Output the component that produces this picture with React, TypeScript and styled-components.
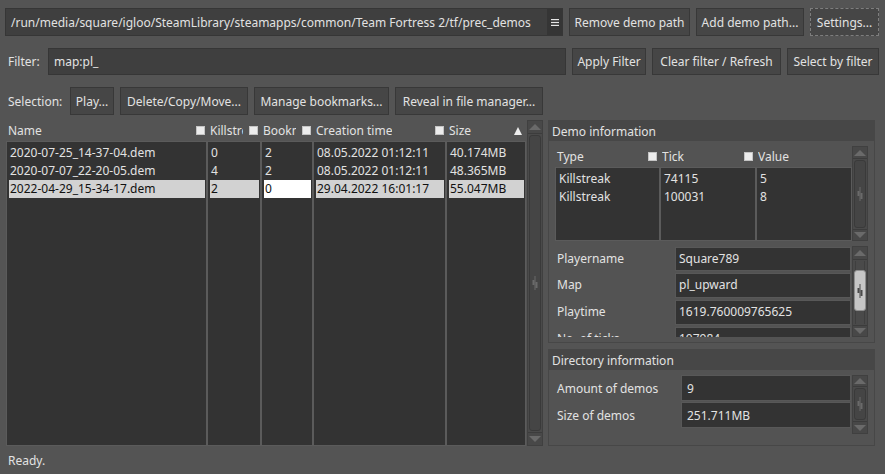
import React from "react";
import styled, { createGlobalStyle } from "styled-components";

const Global = createGlobalStyle`
  html, body { margin: 0; padding: 0; background: #545454; }
  #root { width: 885px; height: 474px; }
`;

const Window = styled.div`
  width: 885px;
  height: 474px;
  box-sizing: border-box;
  background: #545454;
  color: #e2e2e2;
  font-family: "Noto Sans", "DejaVu Sans", sans-serif;
  font-size: 12px;
  display: flex;
  flex-direction: column;
  padding: 8px 6px 0 5px;
  overflow: hidden;
`;

const Bar = styled.div<{ $top?: number; $h?: number }>`
  display: flex;
  align-items: stretch;
  gap: 6px;
  height: ${(p) => p.$h ?? 28}px;
  margin-top: ${(p) => p.$top ?? 0}px;
  flex-shrink: 0;
`;

const Label = styled.div<{ $w: number }>`
  width: ${(p) => p.$w}px;
  box-sizing: border-box;
  padding-left: 3px;
  display: flex;
  align-items: center;
  white-space: nowrap;
`;

const Button = styled.div<{ $w: number; $focus?: boolean }>`
  width: ${(p) => p.$w}px;
  box-sizing: border-box;
  background: #464646;
  border: 1px ${(p) => (p.$focus ? "dashed #7e7e7e" : "solid #383838")};
  display: flex;
  align-items: center;
  justify-content: center;
  white-space: nowrap;
  overflow: hidden;
`;

const Combo = styled.div<{ $w: number }>`
  width: ${(p) => p.$w}px;
  box-sizing: border-box;
  background: #3f3f3f;
  border: 1px solid #363636;
  display: flex;
  align-items: stretch;
`;

const ComboText = styled.div`
  flex: 1;
  padding-left: 5px;
  display: flex;
  align-items: center;
  white-space: nowrap;
  overflow: hidden;
`;

const ComboArrow = styled.div`
  width: 15px;
  background: #353535;
  display: flex;
  align-items: center;
  justify-content: center;
`;

const TextInput = styled.div<{ $w: number }>`
  width: ${(p) => p.$w}px;
  box-sizing: border-box;
  background: #3f3f3f;
  border: 1px solid #363636;
  padding-left: 5px;
  display: flex;
  align-items: center;
`;

const Main = styled.div`
  display: flex;
  gap: 5px;
  height: 326px;
  margin-top: 5px;
  flex-shrink: 0;
`;

const LeftPane = styled.div`
  width: 538px;
  display: flex;
  gap: 1px;
`;

const TableArea = styled.div`
  width: 521px;
  display: flex;
  flex-direction: column;
`;

const HeaderRow = styled.div<{ $indent?: number; $h?: number }>`
  display: flex;
  height: ${(p) => p.$h ?? 21}px;
  padding-left: ${(p) => p.$indent ?? 0}px;
  flex-shrink: 0;
`;

const HeaderCell = styled.div<{ $w: number; $pad?: number }>`
  width: ${(p) => p.$w}px;
  box-sizing: border-box;
  display: flex;
  align-items: center;
  gap: 5px;
  padding-left: ${(p) => p.$pad ?? 0}px;
  padding-right: 6px;
  white-space: nowrap;
  overflow: hidden;
`;

const HeaderText = styled.span`
  overflow: hidden;
  flex-shrink: 1;
  min-width: 0;
`;

const Check = styled.span`
  width: 9px;
  height: 9px;
  flex-shrink: 0;
  box-sizing: border-box;
  background: #ececec;
  border: 1px solid #c4c4c4;
`;

const SortUp = styled.span`
  margin-left: auto;
  margin-right: -2px;
  flex-shrink: 0;
  width: 0;
  height: 0;
  border-left: 4px solid transparent;
  border-right: 4px solid transparent;
  border-bottom: 8px solid #ededed;
`;

const Body = styled.div<{ $indent?: number }>`
  flex: 1;
  display: flex;
  padding-left: ${(p) => p.$indent ?? 0}px;
  min-height: 0;
`;

const Column = styled.div<{ $w: number }>`
  width: ${(p) => p.$w}px;
  box-sizing: border-box;
  background: #333333;
  border: 1px solid #5b5b5b;
  padding: 2px 1px 2px 2px;
  display: flex;
  flex-direction: column;
  overflow: hidden;
`;

const Cell = styled.div<{ $sel?: "row" | "edit" }>`
  height: 18px;
  line-height: 18px;
  padding-left: 1px;
  white-space: nowrap;
  overflow: hidden;
  background: ${(p) => (p.$sel === "row" ? "#d2d2d2" : p.$sel === "edit" ? "#ffffff" : "transparent")};
  color: ${(p) => (p.$sel ? "#111111" : "inherit")};
`;

/* Scrollbar */
const SBar = styled.div<{ $h?: number }>`
  width: 16px;
  flex-shrink: 0;
  height: ${(p) => (p.$h ? `${p.$h}px` : "auto")};
  background: #4a4a4a;
  box-sizing: border-box;
  border: 1px solid #404040;
  display: flex;
  flex-direction: column;
`;

const SButton = styled.div<{ $h: number; $down?: boolean }>`
  height: ${(p) => p.$h}px;
  flex-shrink: 0;
  display: flex;
  align-items: center;
  justify-content: center;
  background: #484848;
  border-${(p) => (p.$down ? "top" : "bottom")}: 1px solid #3c3c3c;
`;

const Tri = styled.span<{ $down?: boolean }>`
  width: 0;
  height: 0;
  border-left: 6px solid transparent;
  border-right: 6px solid transparent;
  ${(p) => (p.$down ? "border-top" : "border-bottom")}: 6px solid #6a6a6a;
`;

const Groove = styled.div`
  flex: 1;
  display: flex;
  flex-direction: column;
  padding: 1px 0;
  min-height: 0;
`;

const Handle = styled.div<{ $light?: boolean }>`
  flex: 1;
  margin: 0 1px;
  border-radius: 3px;
  border: 1px solid ${(p) => (p.$light ? "#8f8f8f" : "#3a3a3a")};
  background: ${(p) => (p.$light ? "#c6c6c6" : "#454545")};
  display: flex;
  align-items: center;
  justify-content: center;
`;

const GrooveGap = styled.div<{ $h: number }>`
  height: ${(p) => p.$h}px;
  flex-shrink: 0;
  margin: 0 2px;
  border-left: 1px solid #3f3f3f;
  border-right: 1px solid #3f3f3f;
`;

const Grip = ({ color }: { color: string }) => (
  <svg width="6" height="14" viewBox="0 0 6 14">
    <rect x="2.5" y="0" width="1" height="14" fill={color} />
    <rect x="0.5" y="4" width="2" height="5" fill={color} />
    <rect x="3.5" y="6" width="2" height="6" fill={color} />
  </svg>
);

const Scrollbar = ({
  height,
  up,
  down,
  before = 0,
  after = 0,
  light,
}: {
  height?: number;
  up: number;
  down: number;
  before?: number;
  after?: number;
  light?: boolean;
}) => (
  <SBar $h={height}>
    <SButton $h={up}>
      <Tri />
    </SButton>
    <Groove>
      {before > 0 && <GrooveGap $h={before} />}
      <Handle $light={light}>
        <Grip color={light ? "#4a4a4a" : "#6a6a6a"} />
      </Handle>
      {after > 0 && <GrooveGap $h={after} />}
    </Groove>
    <SButton $h={down} $down>
      <Tri $down />
    </SButton>
  </SBar>
);

/* Right panel */
const RightPanel = styled.div`
  width: 327px;
  display: flex;
  flex-direction: column;
  gap: 6px;
`;

const Group = styled.div<{ $h: number }>`
  height: ${(p) => p.$h}px;
  box-sizing: border-box;
  border: 1px solid #474747;
  background: #535353;
  display: flex;
  flex-direction: column;
  flex-shrink: 0;
`;

const GroupTitle = styled.div`
  height: 20px;
  background: #474747;
  padding-left: 3px;
  display: flex;
  align-items: center;
  flex-shrink: 0;
`;

const GroupBody = styled.div`
  padding: 5px 6px 0 6px;
  display: flex;
  flex-direction: column;
  gap: 5px;
`;

const Section = styled.div<{ $h: number }>`
  height: ${(p) => p.$h}px;
  display: flex;
  overflow: hidden;
`;

const SubTable = styled.div`
  width: 297px;
  display: flex;
  flex-direction: column;
`;

const Form = styled.div<{ $gap: number; $top?: number }>`
  width: 297px;
  display: flex;
  flex-direction: column;
  gap: ${(p) => p.$gap}px;
  padding-top: ${(p) => p.$top ?? 0}px;
  overflow: hidden;
`;

const FormRow = styled.div<{ $label: number; $h: number; $lift?: number }>`
  display: grid;
  grid-template-columns: ${(p) => p.$label}px 1fr;
  height: ${(p) => p.$h}px;
  flex-shrink: 0;
  padding-right: 1px;
  & > * {
    padding-bottom: ${(p) => p.$lift ?? 0}px;
  }
`;

const FormLabel = styled.div`
  padding-left: 2px;
  display: flex;
  align-items: center;
  white-space: nowrap;
`;

const Field = styled.div<{ $pad: number }>`
  background: #333333;
  border: 1px solid #585858;
  padding-left: ${(p) => p.$pad}px;
  display: flex;
  align-items: center;
  white-space: nowrap;
  overflow: hidden;
`;

const Status = styled.div`
  height: 28px;
  padding-left: 3px;
  display: flex;
  align-items: center;
  flex-shrink: 0;
`;

const demos = [
  { name: "2020-07-25_14-37-04.dem", ks: "0", bm: "2", time: "08.05.2022 01:12:11", size: "40.174MB" },
  { name: "2020-07-07_22-20-05.dem", ks: "4", bm: "2", time: "08.05.2022 01:12:11", size: "48.365MB" },
  { name: "2022-04-29_15-34-17.dem", ks: "2", bm: "0", time: "29.04.2022 16:01:17", size: "55.047MB" },
];

const events = [
  { type: "Killstreak", tick: "74115", value: "5" },
  { type: "Killstreak", tick: "100031", value: "8" },
];

const info = [
  { label: "Playername", value: "Square789", h: 24 },
  { label: "Map", value: "pl_upward", h: 25 },
  { label: "Playtime", value: "1619.760009765625", h: 25 },
  { label: "No. of ticks", value: "107984", h: 25 },
];

export default function App() {
  const sel = 2;
  return (
    <>
      <Global />
      <Window>
        <Bar>
          <Combo $w={558}>
            <ComboText>/run/media/square/igloo/SteamLibrary/steamapps/common/Team Fortress 2/tf/prec_demos</ComboText>
            <ComboArrow>
              <svg width="8" height="7" viewBox="0 0 8 7">
                <rect x="0" y="0" width="8" height="1.2" fill="#e6e6e6" />
                <rect x="0" y="2.9" width="8" height="1.2" fill="#e6e6e6" />
                <rect x="0" y="5.8" width="8" height="1.2" fill="#e6e6e6" />
              </svg>
            </ComboArrow>
          </Combo>
          <Button $w={121}>Remove demo path</Button>
          <Button $w={108}>Add demo path...</Button>
          <Button $w={69} $focus>Settings...</Button>
        </Bar>

        <Bar $top={12} $h={27}>
          <Label $w={37}>Filter:</Label>
          <TextInput $w={518}>map:pl_</TextInput>
          <Button $w={74}>Apply Filter</Button>
          <Button $w={129}>Clear filter / Refresh</Button>
          <Button $w={92}>Select by filter</Button>
        </Bar>

        <Bar $top={12}>
          <Label $w={59}>Selection:</Label>
          <Button $w={44}>Play...</Button>
          <Button $w={128}>Delete/Copy/Move...</Button>
          <Button $w={135}>Manage bookmarks...</Button>
          <Button $w={148}>Reveal in file manager...</Button>
        </Bar>

        <Main>
          <LeftPane>
            <TableArea>
              <HeaderRow $indent={1}>
                <HeaderCell $w={190} $pad={2}>Name</HeaderCell>
                <HeaderCell $w={53}>
                  <Check />
                  <HeaderText>Killstreaks</HeaderText>
                </HeaderCell>
                <HeaderCell $w={53}>
                  <Check />
                  <HeaderText>Bookmarks</HeaderText>
                </HeaderCell>
                <HeaderCell $w={133}>
                  <Check />
                  <HeaderText>Creation time</HeaderText>
                </HeaderCell>
                <HeaderCell $w={91}>
                  <Check />
                  <HeaderText>Size</HeaderText>
                  <SortUp />
                </HeaderCell>
              </HeaderRow>
              <Body $indent={1}>
                <Column $w={201}>
                  {demos.map((d, i) => (
                    <Cell key={d.name} $sel={i === sel ? "row" : undefined}>{d.name}</Cell>
                  ))}
                </Column>
                <Column $w={54}>
                  {demos.map((d, i) => (
                    <Cell key={i} $sel={i === sel ? "row" : undefined}>{d.ks}</Cell>
                  ))}
                </Column>
                <Column $w={52}>
                  {demos.map((d, i) => (
                    <Cell key={i} $sel={i === sel ? "edit" : undefined}>{d.bm}</Cell>
                  ))}
                </Column>
                <Column $w={133}>
                  {demos.map((d, i) => (
                    <Cell key={i} $sel={i === sel ? "row" : undefined}>{d.time}</Cell>
                  ))}
                </Column>
                <Column $w={80}>
                  {demos.map((d, i) => (
                    <Cell key={i} $sel={i === sel ? "row" : undefined}>{d.size}</Cell>
                  ))}
                </Column>
              </Body>
            </TableArea>
            <Scrollbar up={12} down={12} />
          </LeftPane>

          <RightPanel>
            <Group $h={223}>
              <GroupTitle>Demo information</GroupTitle>
              <GroupBody>
                <Section $h={95}>
                  <SubTable>
                    <HeaderRow>
                      <HeaderCell $w={93} $pad={2}>Type</HeaderCell>
                      <HeaderCell $w={96}>
                        <Check />
                        <HeaderText>Tick</HeaderText>
                      </HeaderCell>
                      <HeaderCell $w={108}>
                        <Check />
                        <HeaderText>Value</HeaderText>
                      </HeaderCell>
                    </HeaderRow>
                    <Body>
                      <Column $w={105}>
                        {events.map((e, i) => (
                          <Cell key={i}>{e.type}</Cell>
                        ))}
                      </Column>
                      <Column $w={96}>
                        {events.map((e, i) => (
                          <Cell key={i}>{e.tick}</Cell>
                        ))}
                      </Column>
                      <Column $w={96}>
                        {events.map((e, i) => (
                          <Cell key={i}>{e.value}</Cell>
                        ))}
                      </Column>
                    </Body>
                  </SubTable>
                  <Scrollbar up={11} down={10} />
                </Section>
                <Section $h={91}>
                  <Form $gap={2} $top={1}>
                    {info.map((r) => (
                      <FormRow key={r.label} $label={120} $h={r.h} $lift={2}>
                        <FormLabel>{r.label}</FormLabel>
                        <Field $pad={3}>{r.value}</Field>
                      </FormRow>
                    ))}
                  </Form>
                  <Scrollbar up={12} down={10} before={9} after={13} light />
                </Section>
              </GroupBody>
            </Group>
            <Group $h={97}>
              <GroupTitle>Directory information</GroupTitle>
              <GroupBody>
                <Section $h={59}>
                  <Form $gap={1}>
                    <FormRow $label={126} $h={26}>
                      <FormLabel>Amount of demos</FormLabel>
                      <Field $pad={5}>9</Field>
                    </FormRow>
                    <FormRow $label={126} $h={26}>
                      <FormLabel>Size of demos</FormLabel>
                      <Field $pad={5}>251.711MB</Field>
                    </FormRow>
                  </Form>
                  <Scrollbar up={10} down={11} />
                </Section>
              </GroupBody>
            </Group>
          </RightPanel>
        </Main>

        <Status>Ready.</Status>
      </Window>
    </>
  );
}
